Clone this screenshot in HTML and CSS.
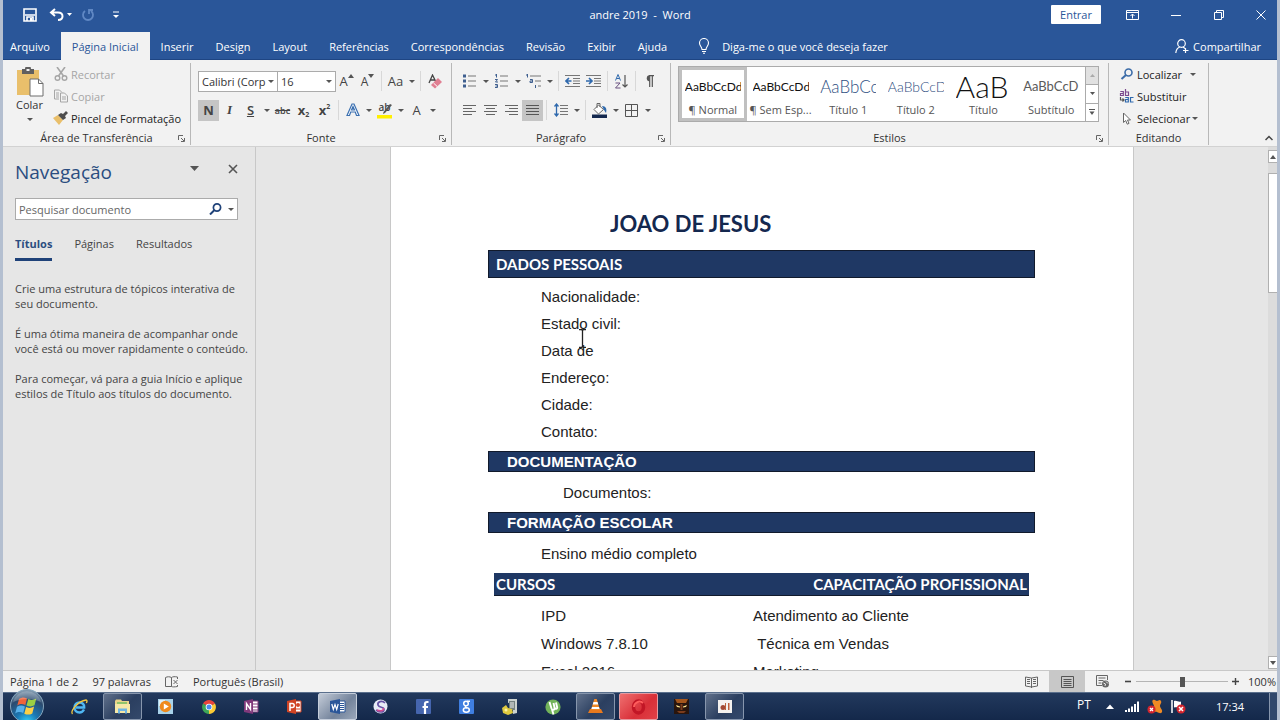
FILE: index.html
```html
<!DOCTYPE html>
<html lang="pt-BR">
<head>
  <meta charset="UTF-8">
  <meta name="viewport" content="width=device-width, initial-scale=1.0">
  <title>andre 2019 - Word</title>
  <link rel="stylesheet" href="styles.css">
</head>
<body>

  <header class="topo">
    <div class="titulo-barra">
      <div class="acesso-rapido">
        <button class="btn-topo" aria-label="Salvar"><svg width="14" height="14" viewBox="0 0 14 14"><path d="M1 1h12v12H1z" fill="none" stroke="#fff" stroke-width="1.6"/><path d="M2 7h10M4 13V9h6v4" fill="none" stroke="#fff" stroke-width="1.6"/><path d="M7 10h2v3H7z" fill="#fff"/></svg></button>
        <button class="btn-topo btn-desfazer" aria-label="Desfazer"><svg width="24" height="14" viewBox="0 0 24 14"><path d="M6 1L2 4.500l4 3.500M2.500 4.500H9c6 0 6 7.500 0 7.500" fill="none" stroke="#fff" stroke-width="2"/><path d="M18 5h5l-2.500 3z" fill="#fff"/></svg></button>
        <button class="btn-topo" aria-label="Refazer"><svg width="14" height="14" viewBox="0 0 14 14"><path d="M4 3a5 5 0 1 0 6 0M8 6V2h4" fill="none" stroke="#6088c4" stroke-width="1.8"/></svg></button>
        <button class="btn-topo" aria-label="Personalizar"><svg width="8" height="8" viewBox="0 0 8 8"><path d="M1 1h6" stroke="#fff"/><path d="M1 4h6L4 7z" fill="#fff"/></svg></button>
      </div>
      <h1 class="titulo">andre 2019 &nbsp;- &nbsp;Word</h1>
      <div class="janela">
        <button class="entrar">Entrar</button>
        <button class="btn-janela" aria-label="Opções da faixa"><svg width="13" height="10" viewBox="0 0 13 10"><path d="M.5.5h12v9H.5zM.5 2.500h12M6.500 8.500V4M4.500 6l2-2 2 2" fill="none" stroke="#fff"/></svg></button>
        <button class="btn-janela" aria-label="Minimizar"><svg width="10" height="10" viewBox="0 0 10 10"><path d="M0 5.500h10" stroke="#fff"/></svg></button>
        <button class="btn-janela" aria-label="Restaurar"><svg width="10" height="10" viewBox="0 0 10 10"><path d="M.5 2.500h7v7h-7zM2.500 2.500v-2h7v7h-2" fill="none" stroke="#fff"/></svg></button>
        <button class="btn-janela" aria-label="Fechar"><svg width="10" height="10" viewBox="0 0 10 10"><path d="M.5.5l9 9M9.500.5l-9 9" stroke="#fff"/></svg></button>
      </div>
    </div>

    <nav class="guias">
      <a href="#" class="guia arquivo">Arquivo</a>
      <a href="#" class="guia ativa">Página Inicial</a>
      <a href="#" class="guia">Inserir</a>
      <a href="#" class="guia">Design</a>
      <a href="#" class="guia">Layout</a>
      <a href="#" class="guia">Referências</a>
      <a href="#" class="guia">Correspondências</a>
      <a href="#" class="guia">Revisão</a>
      <a href="#" class="guia">Exibir</a>
      <a href="#" class="guia">Ajuda</a>
      <a href="#" class="guia diga-me"><svg width="12" height="16" viewBox="0 0 12 16"><path d="M4 11.500C4 9 1.500 8 1.500 5a4.500 4.500 0 0 1 9 0c0 3-2.500 4-2.500 6.500zM4 13.500h4M5 15.300h2" fill="none" stroke="#fff" stroke-width="1.100"/></svg>Diga-me o que você deseja fazer</a>
      <a href="#" class="guia compartilhar"><svg width="14" height="14" viewBox="0 0 14 14"><circle cx="6.500" cy="4.500" r="3.800" fill="none" stroke="#fff" stroke-width="1.200"/><path d="M.8 14c.3-3.500 2-5.300 4-6M8 8l2 1.500M10.500 9v5M8 11.500h5.500" fill="none" stroke="#fff" stroke-width="1.200"/></svg>Compartilhar</a>
    </nav>
  </header>

  <section class="faixa">
    <div class="grupo transferencia">
      <div class="grupo-corpo">
        <button class="colar"><svg width="28" height="30" viewBox="0 0 28 30"><path d="M1 3h22v25H1z" fill="#e9bf6b"/><path d="M6 2h3a3 3 0 0 1 6 0h3v5H6z" fill="#605f5f"/><path d="M10.500 2h3v2h-3z" fill="#f2f2f2"/><path d="M14 12h8.500l4.500 4.500V29H14z" fill="#fff" stroke="#6d6d6d"/><path d="M22.500 12v4.500H27" fill="none" stroke="#6d6d6d"/></svg>Colar<span class="seta"></span></button>
        <div class="pilha">
          <button class="linha-btn apagado"><svg width="14" height="14" viewBox="0 0 14 14"><path d="M3 0l6.500 9M11 0L4.500 9" stroke="#a6a6a6" stroke-width="1.600"/><circle cx="3.500" cy="11" r="2.300" fill="none" stroke="#a6a6a6" stroke-width="1.400"/><circle cx="10.500" cy="11" r="2.300" fill="none" stroke="#a6a6a6" stroke-width="1.400"/></svg>Recortar</button>
          <button class="linha-btn apagado"><svg width="14" height="14" viewBox="0 0 14 14"><path d="M5 10H.5V1h5L8 3.500M2 4h3M2 6h3M2 8h3" fill="none" stroke="#a6a6a6"/><path d="M6.500 4h4L13.500 7v6h-7zM8 8h4M8 10h4" fill="#f2f2f2" stroke="#a6a6a6"/></svg>Copiar</button>
          <button class="linha-btn"><svg width="16" height="14" viewBox="0 0 16 14"><path d="M0 7l5-3 5 5-4 5z" fill="#e9bf6b"/><path d="M5 4l3-2 2 1 3-3 2 2-3 3 1 2-3 2z" fill="#4d4d4d"/></svg>Pincel de Formatação</button>
        </div>
      </div>
      <div class="grupo-nome">Área de Transferência<svg class="iniciador" width="7" height="7" viewBox="0 0 7 7"><path d="M.5 5V.5H5M3 3l3 3M6.500 3v3.500H3" fill="none" stroke="#666"/></svg></div>
    </div>

    <div class="grupo fonte">
      <div class="grupo-corpo coluna">
        <div class="linha">
          <select class="combo nome-fonte" aria-label="Fonte"><option>Calibri (Corp</option></select>
          <select class="combo tamanho" aria-label="Tamanho da fonte"><option>16</option></select>
          <button class="tool aumentar">A<svg width="6" height="4" viewBox="0 0 6 4"><path d="M0 4l3-4 3 4z" fill="#555"/></svg></button>
          <button class="tool reduzir">A<svg width="6" height="4" viewBox="0 0 6 4"><path d="M0 0h6L3 4z" fill="#555"/></svg></button>
          <span class="sep"></span>
          <button class="tool">Aa</button><button class="drop" aria-label="Mais"></button>
          <span class="sep"></span>
          <button class="tool" aria-label="Limpar formatação"><svg width="14" height="15" viewBox="0 0 14 15"><path d="M1 9L4.500 1 8 8M2 6h5" fill="none" stroke="#444" stroke-width="1.300"/><path d="M10 4l4 4-7 6.500L3 11z" fill="#e07f92"/><path d="M5.500 9l3.800 3.600" stroke="#fff"/></svg></button>
        </div>
        <div class="linha">
          <button class="tool ligado negrito">N</button>
          <button class="tool italico">I</button>
          <button class="tool sublinhado">S</button><button class="drop" aria-label="Mais"></button>
          <button class="tool tachado">abc</button>
          <button class="tool indice">x<sub>2</sub></button>
          <button class="tool indice">x<sup>2</sup></button>
          <span class="sep"></span>
          <button class="tool" aria-label="Efeitos de texto"><svg width="14" height="14" viewBox="0 0 14 14"><path d="M1 12.500L6 1h2l5 11.500h-2.500L9.300 9H4.700l-1.200 3.500zM5.500 7h3L7 3.500z" fill="#fff" stroke="#3a6fb0" stroke-width="1.200"/></svg></button><button class="drop" aria-label="Mais"></button>
          <button class="tool realce"><span>ab</span><svg width="16" height="16" viewBox="0 0 16 16"><path d="M0 12h15v3.500H0z" fill="#ffef00"/><path d="M15 2L8 10l-2 1 .5-2L13 1z" fill="#555"/></svg></button><button class="drop" aria-label="Mais"></button>
          <button class="tool">A</button><button class="drop" aria-label="Mais"></button>
        </div>
      </div>
      <div class="grupo-nome">Fonte<svg class="iniciador" width="7" height="7" viewBox="0 0 7 7"><path d="M.5 5V.5H5M3 3l3 3M6.500 3v3.500H3" fill="none" stroke="#666"/></svg></div>
    </div>

    <div class="grupo paragrafo">
      <div class="grupo-corpo coluna">
        <div class="linha">
          <button class="tool" aria-label="Marcadores"><svg width="13" height="14" viewBox="0 0 13 14"><path d="M0 .5h3v3H0zM0 5.500h3v3H0zM0 10.500h3v3H0z" fill="#3f5f8f"/><path d="M5 2h8M5 7h8M5 12h8" stroke="#777"/></svg></button><button class="drop" aria-label="Mais"></button>
          <button class="tool" aria-label="Numeração"><svg width="13" height="14" viewBox="0 0 13 14"><path d="M1.500 0v3.500M0 1h1.500M0 5.500h2.500L.5 8h2.500M0 10.500h2.500v3H0M.5 12h2" fill="none" stroke="#3f5f8f"/><path d="M5 2h8M5 7h8M5 12h8" stroke="#777"/></svg></button><button class="drop" aria-label="Mais"></button>
          <button class="tool" aria-label="Lista de vários níveis"><svg width="15" height="14" viewBox="0 0 15 14"><path d="M1.500 0v3.500M0 1h1.500M4 5.500h2.500v3H4v-1.500h2.500M9.500 11v3" fill="none" stroke="#3f5f8f"/><path d="M4 2h11M9 7h6M12 12h3" stroke="#777"/></svg></button><button class="drop" aria-label="Mais"></button>
          <span class="sep"></span>
          <button class="tool" aria-label="Diminuir recuo"><svg width="15" height="12" viewBox="0 0 15 12"><path d="M0 .5h15M8 3.500h7M8 6h7M8 8.500h7M0 11.500h15" stroke="#777"/><path d="M6.500 6H1.500M4 3L1 6l3 3" fill="none" stroke="#2f69ad" stroke-width="1.700"/></svg></button>
          <button class="tool" aria-label="Aumentar recuo"><svg width="15" height="12" viewBox="0 0 15 12"><path d="M0 .5h15M8 3.500h7M8 6h7M8 8.500h7M0 11.500h15" stroke="#777"/><path d="M0 6h5M3 3l3 3-3 3" fill="none" stroke="#2f69ad" stroke-width="1.700"/></svg></button>
          <span class="sep"></span>
          <button class="tool" aria-label="Classificar"><svg width="13" height="15" viewBox="0 0 13 15"><path d="M.5 6.500L3 .5l2.500 6M1.500 4.500h3" fill="none" stroke="#2f69ad"/><path d="M.5 9h4.500l-4.500 5h5" fill="none" stroke="#68507f"/><path d="M10 1v12M7.500 10.500L10 13l2.500-2.500" fill="none" stroke="#555" stroke-width="1.200"/></svg></button>
          <span class="sep"></span>
          <button class="tool" aria-label="Mostrar tudo"><svg width="9" height="12" viewBox="0 0 9 12"><path d="M4.500 0a3.300 3.300 0 0 0 0 6.500z" fill="#555"/><path d="M4 .6h5M4.700 0v12M7.300 0v12" stroke="#555" stroke-width="1.200"/></svg></button>
        </div>
        <div class="linha">
          <button class="tool" aria-label="Alinhar à esquerda"><svg width="13" height="12" viewBox="0 0 13 12"><path d="M0 1.500h13M0 4.500h9M0 7.500h13M0 10.500h9" stroke="#666"/></svg></button>
          <button class="tool" aria-label="Centralizar"><svg width="13" height="12" viewBox="0 0 13 12"><path d="M0 1.500h13M2 4.500h9M0 7.500h13M2 10.500h9" stroke="#666"/></svg></button>
          <button class="tool" aria-label="Alinhar à direita"><svg width="13" height="12" viewBox="0 0 13 12"><path d="M0 1.500h13M4 4.500h9M0 7.500h13M4 10.500h9" stroke="#666"/></svg></button>
          <button class="tool ligado" aria-label="Justificar"><svg width="13" height="12" viewBox="0 0 13 12"><path d="M0 1.500h13M0 4.500h13M0 7.500h13M0 10.500h13" stroke="#555"/></svg></button>
          <span class="sep"></span>
          <button class="tool" aria-label="Espaçamento"><svg width="14" height="14" viewBox="0 0 14 14"><path d="M2.500 1v12M.5 3.500l2-2.500 2 2.500M.5 10.500l2 2.500 2-2.500" fill="none" stroke="#2f69ad" stroke-width="1.300"/><path d="M6 2.500h8M6 5.500h8M6 8.500h8M6 11.500h8" stroke="#777"/></svg></button><button class="drop" aria-label="Mais"></button>
          <span class="sep"></span>
          <button class="tool" aria-label="Sombreamento"><svg width="16" height="15" viewBox="0 0 16 15"><path d="M6.500 2l5 4.500-5 4.500L2 6.500z" fill="#fff" stroke="#666"/><path d="M5 5V.5h3V4" fill="none" stroke="#666"/><path d="M10 3c4 0 5 3 4 7l-2-3z" fill="#2f69ad"/><path d="M0 11.500h15V15H0z" fill="#14284f"/></svg></button><button class="drop" aria-label="Mais"></button>
          <button class="tool" aria-label="Bordas"><svg width="13" height="13" viewBox="0 0 13 13"><path d="M.5.5h12v12H.5zM6.500.5v12M.5 6.500h12" fill="none" stroke="#555"/></svg></button><button class="drop" aria-label="Mais"></button>
        </div>
      </div>
      <div class="grupo-nome">Parágrafo<svg class="iniciador" width="7" height="7" viewBox="0 0 7 7"><path d="M.5 5V.5H5M3 3l3 3M6.500 3v3.500H3" fill="none" stroke="#666"/></svg></div>
    </div>

    <div class="grupo estilos">
      <div class="grupo-corpo">
        <div class="galeria">
          <button class="estilo escolhido"><span class="amostra">AaBbCcDd</span>¶ Normal</button>
          <button class="estilo"><span class="amostra">AaBbCcDd</span>¶ Sem Esp...</button>
          <button class="estilo"><span class="amostra titulo1">AaBbCc</span>Título 1</button>
          <button class="estilo"><span class="amostra titulo2">AaBbCcD</span>Título 2</button>
          <button class="estilo"><span class="amostra grande">AaB</span>Título</button>
          <button class="estilo"><span class="amostra subtitulo">AaBbCcD</span>Subtítulo</button>
          <div class="rolagem-galeria">
            <button class="inativo" aria-label="Linha acima"><svg width="5" height="3" viewBox="0 0 5 3"><path d="M0 3l2.500-3L5 3z" fill="#aaa"/></svg></button>
            <button aria-label="Linha abaixo"><svg width="5" height="3" viewBox="0 0 5 3"><path d="M0 0h5L2.500 3z" fill="#555"/></svg></button>
            <button aria-label="Mais estilos"><svg width="6" height="6" viewBox="0 0 6 6"><path d="M0 .5h6" stroke="#555"/><path d="M.5 2.500h5L3 6z" fill="#555"/></svg></button>
          </div>
        </div>
      </div>
      <div class="grupo-nome">Estilos<svg class="iniciador" width="7" height="7" viewBox="0 0 7 7"><path d="M.5 5V.5H5M3 3l3 3M6.500 3v3.500H3" fill="none" stroke="#666"/></svg></div>
    </div>

    <div class="grupo editando">
      <div class="grupo-corpo">
        <div class="pilha">
          <button class="linha-btn"><svg width="13" height="12" viewBox="0 0 13 12"><circle cx="8" cy="4.500" r="3.500" fill="none" stroke="#3c6ca8" stroke-width="1.600"/><path d="M5.500 7L1 11" stroke="#3c6ca8" stroke-width="2"/></svg>Localizar<span class="seta afastada"></span></button>
          <button class="linha-btn"><svg width="15" height="14" viewBox="0 0 15 14"><g fill="none" stroke-width="1.200"><path d="M.8 2.500h3V6.500H1V4.500h2.800M6 0v6.500h3V3H6" stroke="#7b4a8e"/><path d="M5.800 8.500h3v4.500H6v-2.500h2.800M14 8.500h-3v4.500h3" stroke="#2f69ad"/><path d="M1 8v3h3M3 9.500L4.500 11 3 12.500" stroke="#555"/></g></svg>Substituir</button>
          <button class="linha-btn"><svg width="9" height="13" viewBox="0 0 9 13"><path d="M1 1v9.500l2.200-2 1.600 3.700 1.700-.8L5 8h3z" fill="#fff" stroke="#666"/></svg>Selecionar<span class="seta"></span></button>
        </div>
      </div>
      <div class="grupo-nome">Editando</div>
    </div>

    <button class="recolher" aria-label="Recolher a faixa"><svg width="8" height="6" viewBox="0 0 8 6"><path d="M.5 5L4 1.500 7.500 5" fill="none" stroke="#444" stroke-width="1.500"/></svg></button>
  </section>

  <main class="area">
    <aside class="navegacao">
      <div class="nav-topo">
        <h2>Navegação</h2>
        <button aria-label="Opções"><svg width="9" height="5" viewBox="0 0 9 5"><path d="M0 0h9L4.500 5z" fill="#555"/></svg></button>
        <button aria-label="Fechar painel"><svg width="10" height="10" viewBox="0 0 10 10"><path d="M1 1l8 8M9 1L1 9" stroke="#555" stroke-width="1.600"/></svg></button>
      </div>
      <div class="pesquisa">
        <input type="text" placeholder="Pesquisar documento" aria-label="Pesquisar documento">
        <svg width="13" height="12" viewBox="0 0 13 12"><circle cx="8" cy="4.500" r="3.600" fill="none" stroke="#1f4279" stroke-width="1.700"/><path d="M5.500 7L1 11.500" stroke="#1f4279" stroke-width="2"/></svg>
        <span class="seta"></span>
      </div>
      <div class="nav-guias">
        <a href="#" class="ativa">Títulos</a>
        <a href="#">Páginas</a>
        <a href="#">Resultados</a>
      </div>
      <p>Crie uma estrutura de tópicos interativa de<br>seu documento.</p>
      <p>É uma ótima maneira de acompanhar onde<br>você está ou mover rapidamente o conteúdo.</p>
      <p>Para começar, vá para a guia Início e aplique<br>estilos de Título aos títulos do documento.</p>
    </aside>

    <div class="mesa">
      <article class="pagina">
        <h2 class="nome">JOAO DE JESUS</h2>
        <h3 class="barra dados">DADOS PESSOAIS</h3>
        <ul class="itens primeiro">
          <li>Nacionalidade:</li>
          <li>Estado civil:</li>
          <li>Data de</li>
          <li>Endereço:</li>
          <li>Cidade:</li>
          <li>Contato:</li>
        </ul>
        <h3 class="barra">DOCUMENTAÇÃO</h3>
        <ul class="itens recuado">
          <li>Documentos:</li>
        </ul>
        <h3 class="barra">FORMAÇÃO ESCOLAR</h3>
        <ul class="itens">
          <li>Ensino médio completo</li>
        </ul>
        <table class="cursos">
          <thead>
            <tr><th>CURSOS</th><th>CAPACITAÇÃO PROFISSIONAL</th></tr>
          </thead>
          <tbody>
            <tr><td>IPD</td><td>Atendimento ao Cliente</td></tr>
            <tr><td>Windows 7.8.10</td><td>&nbsp;Técnica em Vendas</td></tr>
            <tr><td>Excel 2016</td><td>Marketing</td></tr>
          </tbody>
        </table>
        <svg class="cursor" width="9" height="19" viewBox="0 0 9 19"><path d="M1 .5h2.500l1 1 1-1H8M4.500 1v17M1 18.500h2.500l1-1 1 1H8" fill="none" stroke="#222" stroke-width="1.300"/></svg>
      </article>
    </div>

    <div class="rolagem">
      <button aria-label="Rolar para cima"><svg width="6" height="4" viewBox="0 0 6 4"><path d="M0 4l3-4 3 4z" fill="#555"/></svg></button>
      <div class="trilho"><div class="polegar"></div></div>
      <button aria-label="Rolar para baixo"><svg width="6" height="4" viewBox="0 0 6 4"><path d="M0 0h6L3 4z" fill="#555"/></svg></button>
    </div>
  </main>

  <footer class="status">
    <span>Página 1 de 2</span>
    <span>97 palavras</span>
    <svg width="14" height="12" viewBox="0 0 14 12"><path d="M6.500 1.500C4.500.5 2.500.5.5 1.500v9h6zM6.500 1.500C8 .5 9.500.5 12.500 1v2M6.500 10.500c1 .5 3 .5 6 0V9M8.500 4l4 4M12.500 4l-4 4" fill="none" stroke="#666"/></svg>
    <span>Português (Brasil)</span>
    <div class="exibicao">
      <button class="modo" aria-label="Modo de leitura"><svg width="13" height="12" viewBox="0 0 13 12"><path d="M6.500 2L.5 1v9l6 1 6-1V1zM6.500 2v10M2 3.500h3M2 5.500h3M2 7.500h3M8 3.500h3M8 5.500h3M8 7.500h3" fill="none" stroke="#666"/></svg></button>
      <button class="modo marcado" aria-label="Layout de impressão"><svg width="13" height="12" viewBox="0 0 13 12"><path d="M.5.5h12v11H.5zM2.500 3.500h8M2.500 5.500h8M2.500 7.500h8M2.500 9.500h8" fill="none" stroke="#555"/></svg></button>
      <button class="modo" aria-label="Layout da Web"><svg width="14" height="13" viewBox="0 0 14 13"><path d="M6 10.500H.5V.5h11V5M2.500 3h7M2.500 5.500h5M2.500 8h3" fill="none" stroke="#666"/><circle cx="9.500" cy="9" r="3.500" fill="#666"/><path d="M7.500 8l2 1-.5 2M10 6.500l2 2" fill="none" stroke="#eee"/></svg></button>
      <button class="zoom-btn" aria-label="Menos zoom"><svg width="7" height="7" viewBox="0 0 7 7"><path d="M0 3.500h6" stroke="#444" stroke-width="1.600"/></svg></button>
      <input class="zoom" type="range" min="0" max="100" value="50" aria-label="Zoom">
      <button class="zoom-btn" aria-label="Mais zoom"><svg width="7" height="7" viewBox="0 0 7 7"><path d="M0 3.500h7M3.500 0v7" stroke="#444" stroke-width="1.400"/></svg></button>
      <span class="porcento">100%</span>
    </div>
  </footer>

  <div class="tarefas">
    <button class="iniciar" aria-label="Iniciar"><svg width="36" height="36" viewBox="0 0 36 36"><defs><radialGradient id="orbe" cx=".5" cy="1" r=".95"><stop offset="0" stop-color="#35d5ff"/><stop offset=".35" stop-color="#1b78b4"/><stop offset=".75" stop-color="#2b4a6e"/><stop offset="1" stop-color="#7f97ad"/></radialGradient></defs><circle cx="18" cy="18" r="16.500" fill="url(#orbe)" stroke="#86a6bd"/><path d="M10 11c3-2 5-2 8-.5l-1.700 6.500c-3-1.400-5-1.200-8 .4z" fill="#f0643a"/><path d="M19.300 11c3 1.300 5 1.200 8-.5l-1.800 6.800c-2.800 1.400-5 1.500-8 .2z" fill="#9bcf43"/><path d="M8 18.800c2.800-1.700 5-1.700 7.900-.4L14.200 25c-3-1.300-5-1.200-8 .4z" fill="#57b0ea"/><path d="M17.100 19c3 1.300 5 1.200 8-.4l-1.800 6.800c-2.900 1.500-5 1.500-8 .3z" fill="#fccf46"/><path d="M4 14a14.500 14.500 0 0 1 28 0c-8-4-20-4-28 0z" fill="#fff" opacity=".2"/></svg></button>
    <button class="app" aria-label="Internet Explorer"><svg width="17" height="16" viewBox="0 0 17 16"><path d="M13 10.500c-1 2-2.500 3-4.500 3-3 0-5-2-5-5s2-5 5-5 5 2 4.700 5H5" fill="none" stroke="#4fb7f2" stroke-width="2.400"/><path d="M1.500 15C-1 12 7 2 15 1c1.500 0 1 2 .3 3" fill="none" stroke="#f4c83f" stroke-width="1.300"/></svg></button>
    <button class="app aberto" aria-label="Explorador"><svg width="17" height="15" viewBox="0 0 17 15"><path d="M1 2l1-1.500h5L8 2h7v12H1z" fill="#e9d489"/><path d="M3 3h10v3H3z" fill="#8fc46b"/><path d="M1 5h15v9H1z" fill="#f6e8a7"/><path d="M4 14.500V9.500h9v5h-2v-2.500H6v2.500z" fill="#6fb5e2"/></svg></button>
    <button class="app" aria-label="Media Player"><svg width="15" height="15" viewBox="0 0 15 15"><path d="M0 0h15v15H0z" fill="#a8d2ea"/><path d="M1 1h6v6H1z" fill="#dff0f8"/><circle cx="7.500" cy="7.500" r="5.700" fill="#ef8a1d"/><path d="M5.800 4.500l5 3-5 3z" fill="#fff"/></svg></button>
    <button class="app" aria-label="Chrome"><svg width="14" height="14" viewBox="0 0 14 14"><path d="M7 7L1 3.500A7 7 0 0 1 13 3.500z" fill="#e8453c"/><path d="M7 7V14A7 7 0 0 1 1 3.500z" fill="#3fa657"/><path d="M7 7l6-3.500A7 7 0 0 1 7 14z" fill="#fbcb35"/><circle cx="7" cy="7" r="3.300" fill="#fff"/><circle cx="7" cy="7" r="2.500" fill="#4a8bf0"/></svg></button>
    <button class="app" aria-label="OneNote"><svg width="15" height="15" viewBox="0 0 15 15"><path d="M8 2h6v11H8z" fill="#fff" stroke="#80397b"/><path d="M9 5h5M9 8h5M9 11h5" stroke="#80397b"/><path d="M0 2l9-2v15l-9-2z" fill="#80397b"/><path d="M2.500 11V4.500l4 6V4" fill="none" stroke="#fff" stroke-width="1.400"/></svg></button>
    <button class="app" aria-label="PowerPoint"><svg width="15" height="15" viewBox="0 0 15 15"><path d="M8 2h6v11H8z" fill="#fff" stroke="#d14424"/><circle cx="11" cy="6" r="2" fill="#d14424"/><path d="M9 10h4" stroke="#d14424"/><path d="M0 2l9-2v15l-9-2z" fill="#d14424"/><path d="M3 12V4.500h2.200a2 2 0 0 1 0 4H3" fill="none" stroke="#fff" stroke-width="1.500"/></svg></button>
    <button class="app aberto atual" aria-label="Word"><svg width="16" height="15" viewBox="0 0 16 15"><path d="M8 2h7v11H8z" fill="#fff" stroke="#2a5699"/><path d="M9 4.500h5M9 6.500h5M9 8.500h5M9 10.500h5" stroke="#2a5699"/><path d="M0 2l10-2v15L0 13z" fill="#2a5699"/><path d="M1.800 5l1.500 5.500L5 5.500l1.700 5L8.200 5" fill="none" stroke="#fff" stroke-width="1.200"/></svg></button>
    <button class="app" aria-label="SHAREit"><svg width="15" height="15" viewBox="0 0 15 15"><circle cx="7.500" cy="7.500" r="7" fill="#e8ecf6"/><path d="M12 4C9 1 4 2.500 5 6s6 1 6 4.500-5 3-8 .5" fill="none" stroke="#6654a5" stroke-width="1.700"/><path d="M10.500 9c.5 3-3.500 3.500-6.500 2" fill="none" stroke="#d44c8f" stroke-width="1.500"/></svg></button>
    <button class="app" aria-label="Facebook"><svg width="15" height="15" viewBox="0 0 15 15"><rect width="15" height="15" rx="1" fill="#4565ae"/><path d="M9 15V4.800C9 3.500 9.800 3 11 3h1.500M6.500 8H12" fill="none" stroke="#fff" stroke-width="2.200"/></svg></button>
    <button class="app" aria-label="Google"><svg width="15" height="15" viewBox="0 0 15 15"><rect width="15" height="15" rx="1" fill="#3f7ee0"/><g fill="none" stroke="#fff" stroke-width="1.500"><circle cx="7" cy="4.500" r="2.300"/><path d="M8 2.200h3M7 7c-1 1 0 1.500 1 2"/><ellipse cx="7.300" cy="11" rx="3" ry="2.200"/></g></svg></button>
    <button class="app" aria-label="Ferramentas"><svg width="16" height="16" viewBox="0 0 16 16"><path d="M6 0h9v14l-4 1V3L6 4z" fill="#ccd2cf"/><path d="M7 2h6v9H7z" fill="#74817f"/><path d="M8 4h4M8 6h4M8 8h4" stroke="#eee"/><path d="M0 9l4-3 2 3 4 1 1 4-5 2-5-2z" fill="#dfc93f"/><circle cx="4" cy="11" r="1.500" fill="#fff4a0"/></svg></button>
    <button class="app" aria-label="uTorrent"><svg width="16" height="16" viewBox="0 0 16 16"><circle cx="8" cy="8" r="7.600" fill="#72b35a"/><path d="M4.500 3l2 6.500c.8 2 3 1.500 3.200 0L8.500 4M9.700 9c1 1.500 2.500 1 2.500-.5L11 3.500M7 10.500l1.500 5" fill="none" stroke="#fff" stroke-width="1.900"/></svg></button>
    <button class="app aberto" aria-label="VLC"><svg width="15" height="15" viewBox="0 0 15 15"><path d="M0 14l2-4h11l2 4z" fill="#e8791d"/><path d="M6.300 0h2.400l3.300 11H3z" fill="#f08a26"/><path d="M5.500 3h4l.8 2.500H4.700zM4 8h7l.6 2H3.400z" fill="#fff"/></svg></button>
    <button class="app aberto vermelho" aria-label="Opera"><svg width="15" height="16" viewBox="0 0 15 16"><ellipse cx="7.500" cy="8" rx="5" ry="6" fill="none" stroke="#c21626" stroke-width="3.500"/><path d="M12 4a5.500 6 0 0 0-9 4" fill="none" stroke="#ff5d5d" stroke-width="2"/></svg></button>
    <button class="app" aria-label="Jogo"><svg width="15" height="15" viewBox="0 0 15 15"><path d="M0 0h15v15H0z" fill="#29150d"/><path d="M1 0h13l-2 4H3z" fill="#a4561d"/><path d="M2 6l4 1.500v1L3 8zM13 6L9 7.500v1L12 8z" fill="#ffe38c"/><path d="M6.500 5h2v6h-2zM3 12h9l-2 2H5z" fill="#7b3c1c"/></svg></button>
    <button class="app aberto" aria-label="Gravador"><svg width="14" height="13" viewBox="0 0 14 13"><path d="M0 0h14v13H0z" fill="#f4f1ee"/><circle cx="5" cy="7.500" r="2.500" fill="#a34a35"/><path d="M7 3h1v7H7zM10 3h1.500v7H10z" fill="#bd5f3a"/></svg></button>

    <div class="bandeja">
      <span class="idioma">PT</span>
      <svg width="8" height="5" viewBox="0 0 8 5"><path d="M0 5l4-4.500L8 5z" fill="#fff"/></svg>
      <svg class="sinal" width="14" height="12" viewBox="0 0 14 12"><path d="M0 9h2v2H0zM3 7.500h2V11H3zM6 5.500h2V11H6zM9 3h2v8H9zM12 .5h2V11h-2z" fill="#fff"/></svg>
      <svg width="16" height="15" viewBox="0 0 16 15"><path d="M6 1c2-1 3 1 4 1s3-2 4 0-1 3-1 5 3 4 2 6-3 1-5 0-3 1-5-1 2-4 2-5-3-5-1-6z" fill="#f08a24"/><circle cx="4.500" cy="10.500" r="4" fill="#d3252e"/><path d="M3 9l3 3M6 9l-3 3" stroke="#fff" stroke-width="1.300"/></svg>
      <svg width="15" height="14" viewBox="0 0 15 14"><path d="M1 0v13" stroke="#fff" stroke-width="1.500"/><path d="M3 1c3-1 4 1.500 7 .5v6C7 8.500 6 6.500 3 7.500z" fill="#fff"/><circle cx="10" cy="9" r="4.500" fill="#d3252e"/><path d="M8 7l4 4M12 7l-4 4" stroke="#fff" stroke-width="1.500"/></svg>
      <span class="hora">17:34</span>
      <button class="mostrar-area" aria-label="Mostrar área de trabalho"></button>
    </div>
  </div>

</body>
</html>
```
FILE: styles.css
```css
* {
  box-sizing: border-box;
}
body {
  display: flex;
  flex-direction: column;
  height: 100vh;
  margin: 0;
  padding: 0 3px;
  overflow: hidden;
  background-color: #b4bfd0;
  font-family: 'Open Sans', 'Noto Sans', sans-serif;
  font-size: 11px;
  color: #333;
}
button, input, select {
  margin: 0;
  padding: 0;
  border: none;
  background: none;
  font: inherit;
  color: inherit;
}
a {
  color: inherit;
  text-decoration: none;
}
svg {
  flex: none;
  display: block;
}

/* Barra de título */
.topo {
  flex: none;
  background-color: #2a5699;
  color: #fff;
}
.titulo-barra {
  display: grid;
  grid-template-columns: 1fr auto 1fr;
  align-items: center;
  height: 29px;
}
.acesso-rapido {
  display: flex;
  align-items: center;
  gap: 8px;
  padding-left: 20px;
}
.btn-topo:last-child {
  margin-left: 9px;
}
.btn-desfazer {
  margin-left: 4px;
}
.titulo {
  margin: 0;
  font-size: 11px;
  font-weight: 400;
}
.janela {
  display: flex;
  justify-content: flex-end;
  align-items: center;
}
.entrar {
  width: 50px;
  height: 19px;
  margin-right: 10px;
  border-radius: 1px;
  background-color: #fff;
  color: #2a5699;
}
.btn-janela {
  display: flex;
  justify-content: center;
  width: 43px;
}
.btn-janela:last-child {
  width: 32px;
  margin-left: 5px;
}

/* Guias */
.guias {
  display: flex;
  align-items: stretch;
  height: 31px;
  padding-top: 3px;
  box-shadow: inset 0 -1px #1e4583;
}
.guia {
  display: flex;
  align-items: center;
  padding: 0 11px;
  white-space: nowrap;
}
.guia.arquivo {
  padding-left: 7px;
}
.guia.ativa {
  background-color: #f2f2f2;
  color: #2a5699;
}
.diga-me {
  gap: 12px;
  padding-left: 20px;
}
.compartilhar {
  gap: 4px;
  margin-left: auto;
  padding-right: 16px;
}

/* Faixa de opções */
.faixa {
  display: flex;
  flex: none;
  height: 87px;
  padding-top: 3px;
  background-color: #f2f2f2;
  border-bottom: 1px solid #d2d2d2;
}
.grupo {
  display: flex;
  flex-direction: column;
  margin-bottom: 1px;
  border-right: 1px solid #b8b8b8;
}
.grupo-corpo {
  display: flex;
  flex: 1;
}
.grupo-corpo.coluna {
  flex-direction: column;
  gap: 7px;
  padding: 7px 0 0 7px;
}
.grupo-nome {
  display: flex;
  justify-content: center;
  align-items: center;
  position: relative;
  height: 16px;
}
.iniciador {
  position: absolute;
  right: 5px;
  top: 6px;
}
.transferencia {
  width: 188px;
}
.fonte {
  width: 261px;
}
.paragrafo {
  width: 219px;
}
.estilos {
  flex: 1;
  min-width: 0;
}
.editando {
  width: 100px;
}
.colar {
  display: flex;
  flex-direction: column;
  align-items: center;
  width: 50px;
  padding: 4px 0 0 3px;
}
.seta, .drop::after {
  content: '';
  display: inline-block;
  border: 3px solid transparent;
  border-top-color: #555;
  border-bottom: none;
}
.colar .seta {
  margin-top: 6px;
}
.pilha {
  display: flex;
  flex-direction: column;
}
.linha-btn {
  display: flex;
  align-items: center;
  gap: 2px;
  height: 22px;
  white-space: nowrap;
  color: #222;
}
.linha-btn svg {
  width: 16px;
}
.linha-btn .afastada {
  margin-left: 6px;
}
.linha-btn.apagado {
  color: #a6a6a6;
}
.editando .pilha {
  padding-left: 10px;
}
.linha {
  display: flex;
  align-items: center;
  height: 22px;
}
.combo {
  height: 21px;
  padding: 0 3px;
  border: 1px solid #ababab;
  appearance: none;
  background: #fff url("data:image/svg+xml,%3Csvg xmlns='http://www.w3.org/2000/svg' width='6' height='3'%3E%3Cpath d='M0 0h6L3 3z' fill='%23555'/%3E%3C/svg%3E") no-repeat right 3px center;
}
.nome-fonte {
  width: 80px;
}
.tamanho {
  width: 58px;
  border-left: none;
}
.tool {
  display: flex;
  justify-content: center;
  align-items: center;
  flex: none;
  position: relative;
  width: 21px;
  height: 21px;
  font-size: 13px;
  color: #444;
}
.ligado {
  background-color: #c5c5c5;
}
.drop {
  display: flex;
  justify-content: center;
  align-items: center;
  flex: none;
  width: 11px;
  height: 21px;
}
.sep {
  width: 1px;
  height: 20px;
  margin: 0 3px;
  background-color: #d8d8d8;
}
.aumentar svg, .reduzir svg {
  align-self: flex-start;
  margin-top: 3px;
}
.reduzir {
  font-size: 12px;
}
.negrito {
  font-weight: 700;
}
.italico {
  font-family: 'Liberation Serif', serif;
  font-style: italic;
  font-weight: 700;
}
.sublinhado {
  font-weight: 600;
  text-decoration: underline;
}
.tachado {
  font-size: 9px;
  font-weight: 600;
  text-decoration: line-through;
}
.indice {
  font-weight: 700;
}
.indice sub, .indice sup {
  font-size: 7px;
  line-height: 1;
}
.indice sub {
  align-self: flex-end;
  margin-bottom: 3px;
}
.indice sup {
  align-self: flex-start;
  margin-top: 3px;
}
.realce {
  font-size: 10px;
  font-weight: 600;
  line-height: 10px;
  align-items: flex-start;
  padding-top: 2px;
}
.realce svg {
  position: absolute;
  left: 3px;
  top: 3px;
}

/* Galeria de estilos */
.galeria {
  display: flex;
  flex: 1;
  height: 56px;
  margin: 3px 9px 0 7px;
  border: 1px solid #ababab;
  background-color: #fff;
}
.estilo {
  display: flex;
  flex-direction: column;
  align-items: center;
  flex: 1;
  min-width: 0;
  color: #555;
  white-space: nowrap;
  border: 3px solid transparent;
}
.estilo.escolhido {
  border-color: #c0c0c0;
}
.amostra {
  display: flex;
  align-items: center;
  width: 56px;
  height: 32px;
  overflow: hidden;
  font-family: Lato, sans-serif;
  font-size: 12px;
  color: #111;
}
.titulo1 {
  font-size: 17px;
  font-weight: 300;
  color: #2f4f82;
}
.titulo2 {
  font-size: 14px;
  font-weight: 300;
  color: #2f4f82;
}
.grande {
  font-size: 30px;
  font-weight: 300;
}
.subtitulo {
  font-size: 13px;
  color: #5a5a5a;
}
.rolagem-galeria {
  display: flex;
  flex-direction: column;
  width: 13px;
  border-left: 1px solid #ababab;
}
.rolagem-galeria button {
  display: flex;
  flex: 1;
  justify-content: center;
  align-items: center;
  border-bottom: 1px solid #ababab;
}
.rolagem-galeria button:last-child {
  border-bottom: none;
}
.rolagem-galeria .inativo {
  background-color: #e1e1e1;
}
.recolher {
  display: flex;
  justify-content: flex-end;
  align-items: flex-end;
  width: 68px;
  padding: 0 4px 5px 0;
}

/* Área de trabalho */
.area {
  display: flex;
  flex: 1;
  min-height: 0;
  background-color: #e6e6e6;
}
.navegacao {
  flex: none;
  width: 253px;
  padding: 10px 10px 0 12px;
  border-right: 1px solid #c8c8c8;
  color: #444;
}
.nav-topo {
  display: flex;
  align-items: center;
  padding-right: 7px;
}
.nav-topo h2 {
  flex: 1;
  margin: 0;
  font-size: 19px;
  font-weight: 400;
  line-height: 30px;
  color: #2b4d80;
}
.nav-topo button {
  margin-bottom: 7px;
}
.nav-topo button:last-child {
  margin-left: 29px;
}
.pesquisa {
  display: flex;
  align-items: center;
  width: 223px;
  height: 22px;
  margin-top: 11px;
  padding-right: 3px;
  border: 1px solid #ababab;
  background-color: #fff;
}
.pesquisa input {
  flex: 1;
  min-width: 0;
  padding-left: 3px;
}
.pesquisa input::placeholder {
  color: #666;
}
.pesquisa .seta {
  margin-left: 6px;
}
.nav-guias {
  display: flex;
  gap: 22px;
  margin: 15px 0 20px;
}
.nav-guias a {
  padding-bottom: 5px;
  line-height: 18px;
  border-bottom: 3px solid transparent;
}
.nav-guias .ativa {
  font-weight: 700;
  color: #2b4d80;
  border-bottom-color: #1f4279;
}
.navegacao p {
  margin: 0 0 15px;
  line-height: 15px;
  white-space: nowrap;
}
.mesa {
  flex: 1;
  min-width: 0;
  overflow: hidden;
}

/* Documento */
.pagina {
  position: relative;
  width: 744px;
  height: 1050px;
  margin: 0 auto;
  padding: 62px 98px 0 97px;
  background-color: #fff;
  border-left: 1px solid #c8c8c8;
  border-right: 1px solid #c8c8c8;
  font-family: 'Liberation Sans', Arial, sans-serif;
  font-size: 15px;
  color: #222;
}
.nome {
  margin: 0;
  padding: 0 0 11px 122px;
  font-family: Lato, sans-serif;
  font-size: 22px;
  line-height: 30px;
  color: #14284f;
}
.barra {
  margin: 0;
  padding-left: 18px;
  border: 1px solid #111a2c;
  background-color: #1f3864;
  color: #fff;
  font-size: 15px;
  line-height: 19px;
}
.dados {
  padding-left: 7px;
  font-family: Lato, sans-serif;
  line-height: 26px;
}
.itens {
  margin: 0;
  padding: 7px 0 6px 53px;
  list-style: none;
  line-height: 27px;
}
.itens.primeiro {
  padding-top: 5px;
}
.itens.recuado {
  padding-left: 75px;
}
.cursos {
  width: 535px;
  margin-left: 6px;
  border-collapse: collapse;
  table-layout: fixed;
}
.cursos th {
  padding: 0 2px;
  background-color: #1f3864;
  border-bottom: 1px solid #111a2c;
  color: #fff;
  font-family: Lato, sans-serif;
  line-height: 22px;
  text-align: left;
}
.cursos th:first-child {
  width: 259px;
}
.cursos th:last-child {
  text-align: right;
}
.cursos td {
  padding: 0;
  line-height: 28px;
}
.cursos td:first-child {
  padding-left: 47px;
}
.cursos tbody::before {
  content: '';
  display: block;
  height: 6px;
}
.cursor {
  position: absolute;
  left: 187px;
  top: 182px;
}
.rolagem {
  display: flex;
  flex-direction: column;
  width: 9px;
  padding: 3px 0 1px;
  background-color: #dcdcdc;
}
.rolagem button {
  display: flex;
  justify-content: center;
  align-items: center;
  height: 13px;
  border: 1px solid #b0b0b0;
  border-right: none;
  background-color: #fff;
}
.trilho {
  flex: 1;
  padding-top: 10px;
}
.polegar {
  height: 120px;
  border: 1px solid #b0b0b0;
  border-right: none;
  background-color: #fff;
}

/* Barra de status */
.status {
  display: flex;
  flex: none;
  align-items: center;
  gap: 14px;
  height: 22px;
  padding-left: 7px;
  border-top: 1px solid #c8c8c8;
  background-color: #f2f2f2;
}
.exibicao {
  display: flex;
  align-items: center;
  height: 100%;
  margin-left: auto;
}
.modo {
  display: flex;
  justify-content: center;
  align-items: center;
  width: 36px;
  height: 100%;
}
.marcado {
  background-color: #c8c8c8;
}
.zoom-btn {
  padding: 0 4px;
}
.zoom {
  width: 92px;
  height: 12px;
  margin: 0;
  appearance: none;
  background: linear-gradient(#b5b5b5, #b5b5b5) no-repeat center / 100% 1px;
}
.zoom::-webkit-slider-thumb {
  appearance: none;
  width: 5px;
  height: 10px;
  background-color: #555;
}
.porcento {
  padding: 0 1px 0 5px;
}

/* Barra de tarefas */
.tarefas {
  display: flex;
  flex: none;
  align-items: stretch;
  height: 28px;
  border-top: 1px solid #5a6f8c;
  background: linear-gradient(#22395d, #14284a);
  color: #fff;
}
.iniciar {
  flex: none;
  width: 55px;
  padding-left: 6px;
}
.iniciar svg {
  margin-top: -5px;
}
.app {
  display: flex;
  justify-content: center;
  align-items: center;
  width: 39px;
  margin: 0 2px;
  border: 1px solid transparent;
  border-radius: 2px;
}
.aberto {
  border-color: #8796ad;
  background: linear-gradient(135deg, #61718b, #2b3f60 55%, #34496b);
}
.atual {
  border-color: #c5cedb;
  background: linear-gradient(135deg, #c3cbd7, #74849c 60%, #9aa7ba);
}
.vermelho {
  border-color: #e59aa0;
  background: linear-gradient(135deg, #ef7070, #d92f38 60%, #e04148);
}
.bandeja {
  display: flex;
  align-items: center;
  gap: 8px;
  margin-left: auto;
}
.idioma {
  margin: 0 7px 4px 0;
  font-size: 12px;
}
.sinal {
  margin-left: 3px;
}
.hora {
  margin-left: 22px;
}
.mostrar-area {
  align-self: stretch;
  width: 8px;
  margin-left: 17px;
  border-left: 1px solid #8796ad;
  background-color: #31486c;
}
```
